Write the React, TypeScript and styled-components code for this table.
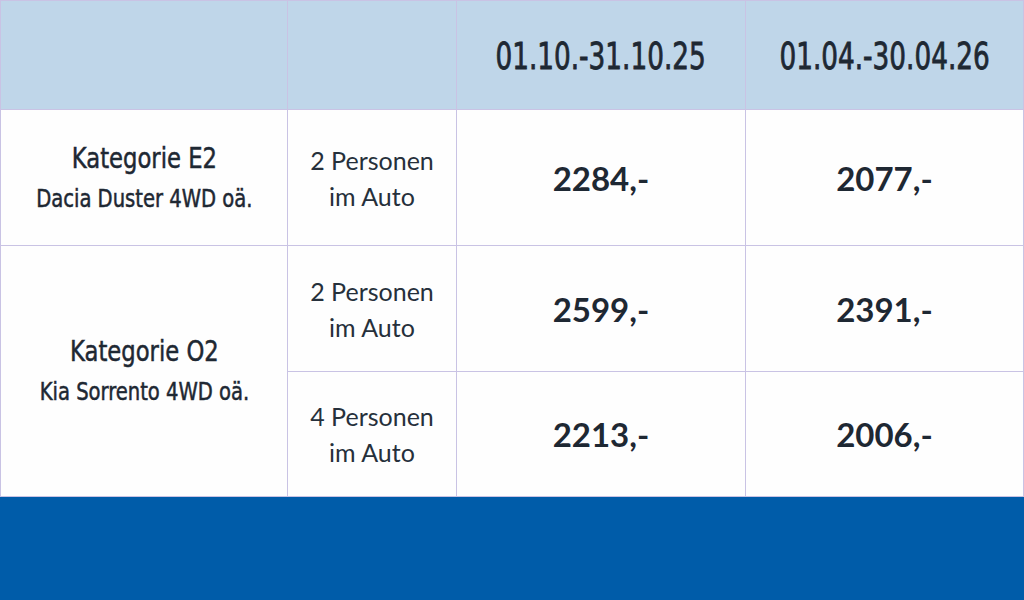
import { FC } from 'react';
import styled, { createGlobalStyle } from 'styled-components';

const GlobalStyle = createGlobalStyle`
  html, body, #root {
    height: 100%;
    margin: 0;
  }
  body {
    background: #005ca9;
    font-family: Lato, "Open Sans", sans-serif;
    color: #1e2833;
  }
`;

const Page = styled.div`
  display: flex;
  flex-direction: column;
  height: 100%;
`;

const Table = styled.div`
  display: grid;
  grid-template-columns: 286px 168px 288px 277px;
  grid-template-rows: 108px 135px 125px 124px;
  gap: 1px;
  padding: 1px;
  background: #c9c3e4;
`;

const Cell = styled.div<{ head?: boolean; span?: number }>`
  display: flex;
  flex-direction: column;
  align-items: center;
  justify-content: center;
  text-align: center;
  background: ${({ head }) => (head ? '#bfd6e9' : '#fefefe')};
  grid-row: ${({ span }) => (span ? `span ${span}` : 'auto')};
`;

// the narrow display face is not installed, so squeeze a condensed one
const Narrow = styled.div<{ squeeze: number; stroke?: number }>`
  font-family: "DejaVu Sans Condensed", "Liberation Sans Narrow", sans-serif;
  white-space: nowrap;
  transform: scaleX(${({ squeeze }) => squeeze});
  -webkit-text-stroke: ${({ stroke }) => stroke ?? 0.5}px #1e2833;
  color: #1e2833;
`;

const DateTitle = styled(Narrow)`
  font-size: 38px;
  padding-top: 2px;
`;

const CarTitle = styled(Narrow)`
  font-size: 29px;
  line-height: 42px;
`;

const CarModel = styled(Narrow)`
  font-size: 25px;
  line-height: 40px;
`;

const Persons = styled.div`
  font-size: 25px;
  line-height: 36px;
  color: #26303b;
`;

const Price = styled.div`
  font-size: 33px;
  font-weight: 700;
  color: #1e2833;
`;

const Footer = styled.div`
  flex: 1;
  background: #005ca9;
`;

type RowProps = {
  persons: number;
  prices: [string, string];
};

const PriceRow: FC<RowProps> = ({ persons, prices }) => (
  <>
    <Cell>
      <Persons>
        {persons} Personen
        <br />
        im Auto
      </Persons>
    </Cell>
    <Cell>
      <Price>{prices[0]}</Price>
    </Cell>
    <Cell>
      <Price>{prices[1]}</Price>
    </Cell>
  </>
);

const App = () => (
  <Page>
    <GlobalStyle />
    <Table>
      <Cell head />
      <Cell head />
      <Cell head>
        <DateTitle squeeze={0.77} stroke={0.8}>01.10.-31.10.25</DateTitle>
      </Cell>
      <Cell head>
        <DateTitle squeeze={0.77} stroke={0.8}>01.04.-30.04.26</DateTitle>
      </Cell>

      <Cell>
        <CarTitle squeeze={0.87}>Kategorie E2</CarTitle>
        <CarModel squeeze={0.87}>Dacia Duster 4WD oä.</CarModel>
      </Cell>
      <PriceRow persons={2} prices={['2284,-', '2077,-']} />

      <Cell span={2}>
        <CarTitle squeeze={0.87}>Kategorie O2</CarTitle>
        <CarModel squeeze={0.87}>Kia Sorrento 4WD oä.</CarModel>
      </Cell>
      <PriceRow persons={2} prices={['2599,-', '2391,-']} />
      <PriceRow persons={4} prices={['2213,-', '2006,-']} />
    </Table>
    <Footer />
  </Page>
);

export default App;
